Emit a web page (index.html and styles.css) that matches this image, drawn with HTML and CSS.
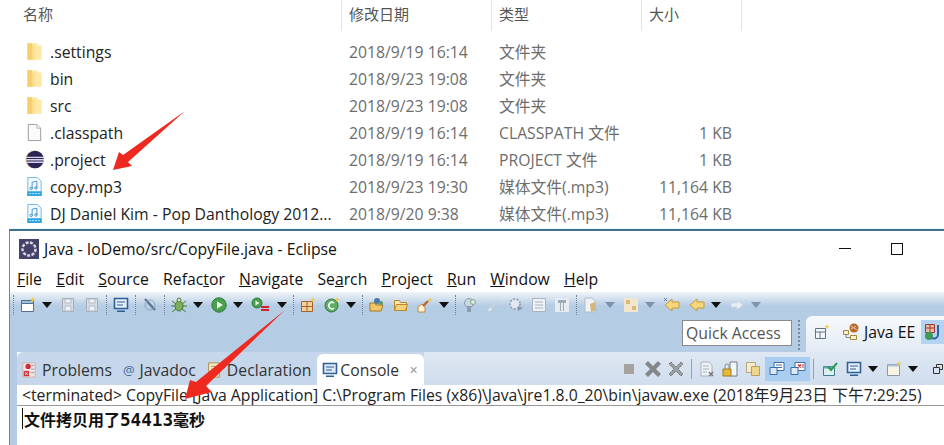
FILE: index.html
```html
<!DOCTYPE html>
<html lang="en">
<head>
    <meta charset="UTF-8">
    <title>Explorer and Eclipse</title>
    <link rel="stylesheet" href="styles.css">
</head>
<body>
    <svg class="defs" width="0" height="0">
        <defs>
            <symbol id="folder" viewBox="0 0 16 16">
                <path d="M2 1h8l1 2h3v12H2z" fill="#fde9a4"/>
                <path d="M2 1h4v14H2z" fill="#f6cf6c"/>
                <path d="M6 3h2v12H6z" fill="#fbdc86"/>
            </symbol>
            <symbol id="blank" viewBox="0 0 16 20">
                <path d="M1.5 1.5h9l4 4v13h-13z" fill="#fbfbfb" stroke="#9a9a9a"/>
                <path d="M10.5 1.5v4h4" fill="#eee" stroke="#b5b5b5"/>
            </symbol>
            <symbol id="eclipse" viewBox="0 0 20 20">
                <circle cx="10" cy="10" r="9.5" fill="#e8c08a"/>
                <circle cx="10.6" cy="10" r="9.2" fill="#2c2255"/>
                <path d="M1.4 7h18.4v1.4H1.4zM1.2 9.6h18.8V11H1.2zM1.8 12.2h17.6v1.4H1.8z" fill="#d8d6ea"/>
            </symbol>
            <symbol id="mp3" viewBox="0 0 17 20">
                <path d="M1.5.5h10l4 4v15h-14z" fill="#f2fbff" stroke="#6db6e6"/>
                <path d="M6 5.5l5-1v7M6 5.5v7" fill="none" stroke="#4b8fc0"/>
                <circle cx="5" cy="12" r="1.3" fill="none" stroke="#4b8fc0"/>
                <circle cx="10" cy="11.5" r="1.3" fill="none" stroke="#4b8fc0"/>
                <path d="M1 15h15v5H1z" fill="#2aa3e0"/>
                <path d="M3 17.5h11" stroke="#d8f1fc" stroke-dasharray="2 1"/>
            </symbol>
            <symbol id="new" viewBox="0 0 16 16">
                <path d="M1.5 3.5h12v11h-12z" fill="#fff" stroke="#55708c"/>
                <path d="M1.5 3.5h12v3h-12z" fill="#9cbfe0" stroke="#55708c"/>
                <path d="M12.5 0l1 2 2 .5-2 1-1 2-1-2-2-1 2-.5z" fill="#f2c94c"/>
            </symbol>
            <symbol id="save" viewBox="0 0 16 16">
                <path d="M2.5 1.5h11v13h-11z" fill="#d5dde6" stroke="#a3adb8"/>
                <path d="M5 2h6v4H5zM5 9h6v5H5z" fill="#eef1f5" stroke="#b3bcc6"/>
            </symbol>
            <symbol id="monitor" viewBox="0 0 16 16">
                <path d="M1.5 1.5h13v10h-13z" fill="#e6effa" stroke="#2f5f95" stroke-width="1.6"/>
                <path d="M4 5h8M4 8h6" stroke="#2f5f95"/>
                <path d="M4 13.5h8v1.5H4z" fill="#2f5f95"/>
            </symbol>
            <symbol id="pencil" viewBox="0 0 16 16">
                <path d="M3 2l10 11" stroke="#5f7690" stroke-width="2.4"/>
                <circle cx="8" cy="8" r="5" fill="none" stroke="#8ea6c2"/>
            </symbol>
            <symbol id="bug" viewBox="0 0 16 16">
                <ellipse cx="8" cy="9" rx="4" ry="5" fill="#7cae5c" stroke="#4a7b35"/>
                <path d="M1 4l4 3M15 4l-4 3M0 9h4M16 9h-4M1 15l4-3M15 15l-4-3" stroke="#4a7b35"/>
                <circle cx="8" cy="3" r="2" fill="#d8e6c8" stroke="#4a7b35"/>
            </symbol>
            <symbol id="run" viewBox="0 0 16 16">
                <circle cx="8" cy="8" r="7.2" fill="#49a04e" stroke="#2f7a3b"/>
                <path d="M6 4.2l6 3.8-6 3.8z" fill="#e8f6e0"/>
            </symbol>
            <symbol id="runext" viewBox="0 0 20 16">
                <circle cx="6" cy="6" r="5" fill="#49a04e" stroke="#2f7a3b"/>
                <path d="M4.5 3.5l4 2.5-4 2.5z" fill="#e8f6e0"/>
                <path d="M10 9h8v2h-8zM10 12h8v2h-8z" fill="#d4202c"/>
            </symbol>
            <symbol id="pkg" viewBox="0 0 16 16">
                <path d="M1.5 4.5h11v10h-11z" fill="#f1d29a" stroke="#a4622c"/>
                <path d="M1.5 9.5h11M7 4.5v10" stroke="#a4622c"/>
                <path d="M13 0l.8 2 2 .6-2 .8-.8 2-.8-2-2-.8 2-.6z" fill="#f2c94c"/>
            </symbol>
            <symbol id="cnew" viewBox="0 0 16 16">
                <circle cx="7.5" cy="8.5" r="6.5" fill="#5cae62" stroke="#2f7a3b"/>
                <path d="M10 6a3.2 3.2 0 1 0 0 5" fill="none" stroke="#fff" stroke-width="1.6"/>
                <path d="M13 0l.8 2 2 .6-2 .8-.8 2-.8-2-2-.8 2-.6z" fill="#f2c94c"/>
            </symbol>
            <symbol id="openp" viewBox="0 0 16 16">
                <path d="M1 6h5l1 2h7l-2 6H1z" fill="#f2c668" stroke="#a87a25"/>
                <circle cx="8" cy="4" r="3" fill="#4f77a8"/>
                <circle cx="12" cy="6" r="2" fill="#5a9b58"/>
            </symbol>
            <symbol id="open" viewBox="0 0 16 16">
                <path d="M1.5 3.5h5l1 2h6v8h-12z" fill="#fbe6ad" stroke="#b88a30"/>
                <path d="M1.5 13.5l2-6h11l-2 6z" fill="#f7d078" stroke="#b88a30"/>
            </symbol>
            <symbol id="search" viewBox="0 0 16 16">
                <path d="M1 15V10l4-3 3 3v5z" fill="#fff2d6" stroke="#b98b4a"/>
                <path d="M6 9l5-5" stroke="#b86a2b" stroke-width="2.4"/>
                <path d="M13 0l.8 2 2 .6-2 .8-.8 2-.8-2-2-.8 2-.6z" fill="#f2c94c"/>
            </symbol>
            <symbol id="g1" viewBox="0 0 16 16">
                <circle cx="7" cy="6" r="4.5" fill="#c9d6e3" stroke="#8d9cab"/>
                <path d="M5 9h4v6H5z" fill="#8d9cab"/>
                <circle cx="11" cy="5" r="2.5" fill="#dbe8dc" stroke="#86a58d"/>
            </symbol>
            <symbol id="g2" viewBox="0 0 16 16">
                <path d="M2 14l9-11 2 1-7 10z" fill="#c5d3e1"/>
                <path d="M2 14l3-3 2 2z" fill="#e6edf4"/>
            </symbol>
            <symbol id="g3" viewBox="0 0 16 16">
                <circle cx="7" cy="7" r="5" fill="#e3e9f0" stroke="#9aa5b1" stroke-width="2" stroke-dasharray="2 1.5"/>
                <path d="M10 9l5 2-5 3z" fill="#8a96a3"/>
            </symbol>
            <symbol id="g4" viewBox="0 0 16 16">
                <path d="M1.5 1.5h13v13h-13z" fill="#eef2f6" stroke="#a9b4c0"/>
                <path d="M4 5h8M4 8h8M4 11h8" stroke="#a9b4c0"/>
            </symbol>
            <symbol id="g5" viewBox="0 0 16 16">
                <path d="M1 1h14v14H1z" fill="#e7ecf2"/>
                <path d="M4 3h8v3H4zM6 6h1v8H6zM9 6h1v8H9z" fill="#9fabb7"/>
            </symbol>
            <symbol id="g6" viewBox="0 0 16 16">
                <path d="M2 1h7l3 3v11H2z" fill="#eef2f6" stroke="#b4bcc5"/>
                <path d="M7 7l5-2 1 8-5 2z" fill="#d5b77c"/>
            </symbol>
            <symbol id="g7" viewBox="0 0 16 16">
                <path d="M1 1h14v14H1z" fill="#f3e6cf"/>
                <path d="M3 3h4v4H3zM9 9h4v4H9z" fill="#d9b978"/>
            </symbol>
            <symbol id="back1" viewBox="0 0 18 16">
                <path d="M9 2L2 8l7 6v-3h7V5H9z" fill="#f6d77e" stroke="#c79a3b"/>
                <path d="M1 1l3 3M4 1L1 4" stroke="#6b7f95"/>
            </symbol>
            <symbol id="back" viewBox="0 0 16 16">
                <path d="M8 2L1 8l7 6v-3h7V5H8z" fill="#f6d77e" stroke="#c79a3b"/>
            </symbol>
            <symbol id="fwd" viewBox="0 0 16 16">
                <path d="M8 3l6 5-6 5v-3H2V6h6z" fill="#e9eef4" stroke="#cdd7e2"/>
            </symbol>
            <symbol id="persp" viewBox="0 0 16 16">
                <path d="M1.5 4.5h10v10h-10z" fill="#f4f6f9" stroke="#5b7490"/>
                <path d="M1.5 8h10M6 8v6.5" stroke="#5b7490"/>
                <path d="M13 0l.8 2 2 .6-2 .8-.8 2-.8-2-2-.8 2-.6z" fill="#f2c94c"/>
            </symbol>
            <symbol id="jee" viewBox="0 0 18 18">
                <path d="M1.5 7.5h5v4h-5zM8.5 12.5h6v4h-6z" fill="#fbf0cf" stroke="#a98537"/>
                <path d="M4 11.5v3h4" fill="none" stroke="#7a8a9a"/>
                <circle cx="12" cy="5" r="4.5" fill="#b8692c"/>
                <path d="M9 3l6 4M9 6l5-3" stroke="#e9c9a6"/>
            </symbol>
            <symbol id="jdev" viewBox="0 0 18 18">
                <path d="M1.5 1.5h9v8h-9z" fill="#e6bfa3" stroke="#a03a32"/>
                <path d="M1.5 5h9M6 1.5v8" stroke="#a03a32"/>
                <circle cx="5" cy="13" r="4" fill="#3c9a57"/>
                <path d="M14 2v10a4 4 0 0 1-6 3" fill="none" stroke="#3060a8" stroke-width="2"/>
            </symbol>
            <symbol id="problems" viewBox="0 0 16 18">
                <path d="M1 1h14v16H1z" fill="#f2e3e3" stroke="#c7b1b1"/>
                <circle cx="7" cy="5" r="3" fill="#c4333a"/>
                <path d="M2 10h6v6H2z" fill="#c4333a"/>
                <path d="M3.5 11.5l3 3m0-3l-3 3" stroke="#fff"/>
                <path d="M10 4h4M10 8h4M10 12h4" stroke="#9a9a9a"/>
            </symbol>
            <symbol id="decl" viewBox="0 0 16 18">
                <path d="M2 1h12v16H2z" fill="#f6e8c6" stroke="#a68a46"/>
                <path d="M5 5h6M5 8h6M5 11h6" stroke="#a68a46"/>
            </symbol>
            <symbol id="consolei" viewBox="0 0 16 16">
                <path d="M1.5 1.5h13v10h-13z" fill="#dce9f7" stroke="#2f5f95" stroke-width="1.6"/>
                <path d="M4 5h8M4 8h6" stroke="#2f5f95"/>
                <path d="M4 13.5h8v1.5H4z" fill="#2f5f95"/>
            </symbol>
            <symbol id="stop" viewBox="0 0 12 12">
                <path d="M1 1h10v10H1z" fill="#a5a29f"/>
            </symbol>
            <symbol id="xbig" viewBox="0 0 16 16">
                <path d="M3 0l5 5 5-5 3 3-5 5 5 5-3 3-5-5-5 5-3-3 5-5-5-5z" fill="#83878c"/>
            </symbol>
            <symbol id="xbig2" viewBox="0 0 16 16">
                <path d="M3 1l5 5 5-5 2 2-5 5 5 5-2 2-5-5-5 5-2-2 5-5-5-5z" fill="#9aa0a6" stroke="#666" stroke-dasharray="1.5 1"/>
            </symbol>
            <symbol id="clear" viewBox="0 0 16 16">
                <path d="M2 1h8l3 3v11H2z" fill="#eef2f6" stroke="#aab3bd"/>
                <path d="M4 5h6M4 8h6M4 11h4" stroke="#aab3bd"/>
                <path d="M10 11l4 4m0-4l-4 4" stroke="#777" stroke-width="1.4"/>
            </symbol>
            <symbol id="lock" viewBox="0 0 16 16">
                <path d="M8 1h7v14H8z" fill="#f2f5f8" stroke="#6f7d8b"/>
                <path d="M1 8h8v7H1z" fill="#e9b93c" stroke="#a37a18"/>
                <path d="M3 8V5a2 2 0 0 1 4 0v3" fill="none" stroke="#8a8f95"/>
            </symbol>
            <symbol id="pin" viewBox="0 0 16 16">
                <path d="M1.5 1.5h9v10h-9z" fill="#f4ebd0" stroke="#b8a878"/>
                <path d="M6.5 5.5h8v9h-8z" fill="#f0d68c" stroke="#b8a05a"/>
            </symbol>
            <symbol id="outp" viewBox="0 0 16 16">
                <path d="M5 1.5h10v8H5z" fill="#fff" stroke="#3a6ea5"/>
                <path d="M7 4h6M7 6.5h6" stroke="#3a6ea5"/>
                <path d="M1 6.5h7v7H1z" fill="#dfe8f2" stroke="#3a6ea5"/>
            </symbol>
            <symbol id="errp" viewBox="0 0 16 16">
                <path d="M5 1.5h10v8H5z" fill="#fff" stroke="#3a6ea5"/>
                <path d="M8 3.5l3 3m0-3l-3 3" stroke="#d02030" stroke-width="1.4"/>
                <path d="M12 4h2M12 6h2" stroke="#d02030"/>
                <path d="M1 6.5h7v7H1z" fill="#dfe8f2" stroke="#3a6ea5"/>
            </symbol>
            <symbol id="dispnew" viewBox="0 0 16 16">
                <path d="M1.5 5.5h11v9h-11z" fill="#dff0f3" stroke="#3c7d8e"/>
                <path d="M1.5 5.5h11v2h-11z" fill="#69a6b6"/>
                <path d="M6 6l3 3 6-7" fill="none" stroke="#2f9a54" stroke-width="2"/>
            </symbol>
            <symbol id="pageplus" viewBox="0 0 16 16">
                <path d="M1.5 3.5h12v11h-12z" fill="#f7f4e6" stroke="#8a97a5"/>
                <path d="M1.5 3.5h12v2h-12z" fill="#a8c4de"/>
                <path d="M13 0l.8 2 2 .6-2 .8-.8 2-.8-2-2-.8 2-.6z" fill="#f2c94c"/>
            </symbol>
            <symbol id="restore" viewBox="0 0 10 10">
                <path d="M3.5.5h6v5h-6z" fill="none" stroke="#333"/>
                <path d="M.5 3.5h6v6h-6z" fill="#d8e3f0" stroke="#333"/>
            </symbol>
        </defs>
    </svg>

    <!-- file list -->
    <div class="explorer">
        <div class="ex-row ex-head">
            <div class="col-name"><span>名称</span></div>
            <div class="col-date">修改日期</div>
            <div class="col-type">类型</div>
            <div class="col-size">大小</div>
        </div>
        <div class="ex-body">
            <div class="ex-row">
                <div class="col-name"><svg class="fi"><use href="#folder"/></svg>.settings</div>
                <div class="col-date">2018/9/19 16:14</div>
                <div class="col-type">文件夹</div>
                <div class="col-size"></div>
            </div>
            <div class="ex-row">
                <div class="col-name"><svg class="fi"><use href="#folder"/></svg>bin</div>
                <div class="col-date">2018/9/23 19:08</div>
                <div class="col-type">文件夹</div>
                <div class="col-size"></div>
            </div>
            <div class="ex-row">
                <div class="col-name"><svg class="fi"><use href="#folder"/></svg>src</div>
                <div class="col-date">2018/9/23 19:08</div>
                <div class="col-type">文件夹</div>
                <div class="col-size"></div>
            </div>
            <div class="ex-row">
                <div class="col-name"><svg class="fi"><use href="#blank"/></svg>.classpath</div>
                <div class="col-date">2018/9/19 16:14</div>
                <div class="col-type">CLASSPATH 文件</div>
                <div class="col-size">1 KB</div>
            </div>
            <div class="ex-row">
                <div class="col-name"><svg class="fi"><use href="#eclipse"/></svg>.project</div>
                <div class="col-date">2018/9/19 16:14</div>
                <div class="col-type">PROJECT 文件</div>
                <div class="col-size">1 KB</div>
            </div>
            <div class="ex-row">
                <div class="col-name"><svg class="fi"><use href="#mp3"/></svg>copy.mp3</div>
                <div class="col-date">2018/9/23 19:30</div>
                <div class="col-type">媒体文件(.mp3)</div>
                <div class="col-size">11,164 KB</div>
            </div>
            <div class="ex-row">
                <div class="col-name"><svg class="fi"><use href="#mp3"/></svg>DJ Daniel Kim - Pop Danthology 2012...</div>
                <div class="col-date">2018/9/20 9:38</div>
                <div class="col-type">媒体文件(.mp3)</div>
                <div class="col-size">11,164 KB</div>
            </div>
        </div>
    </div>

    <!-- eclipse window -->
    <div class="window">
        <div class="titlebar">
            <svg class="app-icon" viewBox="0 0 20 20">
                <path d="M0 0h20v20H0z" fill="#45426a"/>
                <circle cx="10" cy="10" r="6.5" fill="none" stroke="#d9d9e4" stroke-width="2.4" stroke-dasharray="3 1.4"/>
            </svg>
            <span class="title-text">Java - IoDemo/src/CopyFile.java - Eclipse</span>
            <span class="win-min"></span>
            <span class="win-max"></span>
        </div>
        <div class="menubar">
            <span><u>F</u>ile</span>
            <span><u>E</u>dit</span>
            <span><u>S</u>ource</span>
            <span>Refac<u>t</u>or</span>
            <span><u>N</u>avigate</span>
            <span>Se<u>a</u>rch</span>
            <span><u>P</u>roject</span>
            <span><u>R</u>un</span>
            <span><u>W</u>indow</span>
            <span><u>H</u>elp</span>
        </div>
        <div class="toolbar">
            <i class="grip"></i>
            <div class="tb-group">
                <svg class="ic"><use href="#new"/></svg><b class="dd"></b>
                <svg class="ic"><use href="#save"/></svg>
                <svg class="ic"><use href="#save"/></svg>
            </div>
            <i class="sep"></i>
            <div class="tb-group"><svg class="ic"><use href="#monitor"/></svg></div>
            <i class="sep"></i>
            <div class="tb-group"><svg class="ic"><use href="#pencil"/></svg></div>
            <i class="sep"></i>
            <div class="tb-group">
                <svg class="ic"><use href="#bug"/></svg><b class="dd"></b>
                <svg class="ic"><use href="#run"/></svg><b class="dd"></b>
                <svg class="ic wide"><use href="#runext"/></svg><b class="dd"></b>
            </div>
            <i class="sep"></i>
            <div class="tb-group">
                <svg class="ic"><use href="#pkg"/></svg>
                <svg class="ic"><use href="#cnew"/></svg><b class="dd"></b>
            </div>
            <i class="sep"></i>
            <div class="tb-group">
                <svg class="ic"><use href="#openp"/></svg>
                <svg class="ic"><use href="#open"/></svg>
                <svg class="ic"><use href="#search"/></svg><b class="dd"></b>
            </div>
            <i class="sep"></i>
            <div class="tb-group tight">
                <svg class="ic"><use href="#g1"/></svg>
                <svg class="ic"><use href="#g2"/></svg>
                <svg class="ic"><use href="#g3"/></svg>
                <svg class="ic"><use href="#g4"/></svg>
                <svg class="ic"><use href="#g5"/></svg>
            </div>
            <i class="sep"></i>
            <div class="tb-group">
                <svg class="ic"><use href="#g6"/></svg><b class="dd off"></b>
                <svg class="ic"><use href="#g7"/></svg><b class="dd off"></b>
                <svg class="ic wide2"><use href="#back1"/></svg>
                <svg class="ic"><use href="#back"/></svg><b class="dd"></b>
                <svg class="ic"><use href="#fwd"/></svg><b class="dd off"></b>
            </div>
        </div>
        <div class="subbar">
            <input class="quick" type="text" placeholder="Quick Access">
            <i class="grip tall"></i>
            <div class="persp">
                <svg class="ic"><use href="#persp"/></svg>
                <i class="persp-sep"></i>
                <div class="persp-item"><svg class="ic big"><use href="#jee"/></svg>Java EE</div>
                <div class="persp-on"><svg class="ic big"><use href="#jdev"/></svg></div>
            </div>
        </div>
        <div class="panel">
            <div class="tabbar">
                <div class="tab"><svg class="ic"><use href="#problems"/></svg>Problems</div>
                <div class="tab"><span class="at">@</span>Javadoc</div>
                <div class="tab decl"><svg class="ic"><use href="#decl"/></svg>Declaration</div>
                <div class="tab active"><svg class="ic"><use href="#consolei"/></svg>Console<span class="close">✕</span></div>
                <div class="view-tools">
                    <svg class="ic small"><use href="#stop"/></svg>
                    <svg class="ic"><use href="#xbig"/></svg>
                    <svg class="ic"><use href="#xbig2"/></svg>
                    <i class="vsep"></i>
                    <svg class="ic"><use href="#clear"/></svg>
                    <svg class="ic"><use href="#lock"/></svg>
                    <svg class="ic"><use href="#pin"/></svg>
                    <div class="toggles">
                        <svg class="ic"><use href="#outp"/></svg>
                        <svg class="ic"><use href="#errp"/></svg>
                    </div>
                    <i class="vsep after-toggles"></i>
                    <div class="tb-group tail">
                        <svg class="ic"><use href="#dispnew"/></svg>
                        <svg class="ic"><use href="#monitor"/></svg><b class="dd"></b>
                        <svg class="ic"><use href="#pageplus"/></svg><b class="dd"></b>
                        <svg class="restore"><use href="#restore"/></svg>
                    </div>
                </div>
            </div>
            <div class="term-line">&lt;terminated&gt; CopyFile [Java Application] C:\Program Files (x86)\Java\jre1.8.0_20\bin\javaw.exe (2018年9月23日 下午7:29:25)</div>
            <div class="output"><i class="caret"></i>文件拷贝用了<span class="num">54413</span>毫秒</div>
        </div>
    </div>

    <!-- red arrows drawn on top of the screenshot -->
    <svg class="arrows" viewBox="0 0 944 445">
        <path d="M185 111L123 155l-4-3-6 18 19-4-4-4z" fill="#ee2a20"/>
        <path d="M285 310L196 382l-6-2-5 19 27-7-6-6z" fill="#ee2a20"/>
    </svg>
</body>
</html>
```

FILE: styles.css
```css
* {
    box-sizing: border-box;
}
body {
    margin: 0;
    width: 944px;
    height: 445px;
    overflow: hidden;
    background: #fff;
    font-family: "Open Sans", "Noto Sans CJK SC", sans-serif;
    font-size: 15.75px;
    color: #222;
    position: relative;
}
.defs {
    position: absolute;
}
.explorer {
    height: 229px;
    padding-left: 23px;
}
.ex-row {
    display: flex;
    height: 27px;
    align-items: center;
}
.ex-head {
    height: 31px;
    color: #555;
    align-items: stretch;
    font-size: 15px;
}
.ex-head > div {
    display: flex;
    align-items: center;
    border-right: 1px solid #e5e5e5;
    padding-bottom: 4px;
}
.ex-body {
    padding-top: 7px;
}
.col-name {
    width: 319px;
    display: flex;
    align-items: center;
    white-space: nowrap;
}
.ex-body .col-name {
    margin-left: 2px;
    width: 324px;
    color: #222;
}
.ex-body .col-date {
    padding-left: 0;
    color: #6d6d6d;
}
.col-date {
    width: 150px;
    padding-left: 7px;
    color: #555;
}
.col-type {
    width: 150px;
    padding-left: 7px;
    color: #6d6d6d;
}
.ex-body .col-type {
    padding-left: 0;
}
.col-size {
    width: 100px;
    padding-left: 7px;
    color: #6d6d6d;
}
.ex-body .col-size {
    width: 83px;
    padding-left: 0;
    text-align: right;
}
.ex-head .col-type,
.ex-head .col-size {
    color: #555;
}
.fi {
    width: 19px;
    height: 19px;
    margin-right: 6px;
    flex: none;
}

.window {
    height: 216px;
    margin-left: 9px;
    border-top: 2px solid #41708f;
    border-left: 1px solid #5f8bab;
    box-shadow: 0 -1px 0 #e6fbfb;
    background: #b5cce5;
}
.titlebar {
    height: 32px;
    background: #fff;
    display: flex;
    align-items: center;
    padding: 3px 0 0 9px;
}
.app-icon {
    width: 20px;
    height: 20px;
    margin-right: 5px;
}
.title-text {
    color: #111;
}
.win-min {
    width: 12px;
    height: 1px;
    background: #111;
    margin-left: 502px;
}
.win-max {
    width: 12px;
    height: 12px;
    border: 1px solid #111;
    margin-left: 40px;
}
.menubar {
    height: 29px;
    background: #fff;
    display: flex;
    align-items: center;
    gap: 14.2px;
    padding: 3px 0 0 7px;
    color: #111;
}
.toolbar {
    height: 26px;
    display: flex;
    align-items: center;
    padding-left: 3px;
    background: linear-gradient(#f0f4f8, #b5cce5 14px);
}
.grip {
    width: 1px;
    height: 20px;
    margin-right: 6px;
    border-left: 1px dotted #6f7f90;
}
.grip.tall {
    height: 30px;
    margin: 0 6px;
    border-left: 2px dotted #78879a;
}
.tb-group {
    display: flex;
    align-items: center;
    gap: 8px;
}
.tb-group.tight {
    gap: 7px;
}
.sep {
    width: 1px;
    height: 20px;
    margin: 0 6px;
    border-left: 1px dotted #6f7f90;
}
.ic {
    width: 16px;
    height: 16px;
    flex: none;
}
.ic.wide {
    width: 20px;
}
.ic.wide2 {
    width: 18px;
}
.ic.big {
    width: 18px;
    height: 18px;
}
.ic.small {
    width: 12px;
    height: 12px;
    margin-right: 3px;
}
.dd {
    width: 0;
    height: 0;
    margin-left: -2px;
    border: 5px solid transparent;
    border-top: 6px solid #111;
    border-bottom: 0;
}
.dd.off {
    border-top-color: #7d93ab;
}

.subbar {
    height: 34px;
    display: flex;
    align-items: flex-start;
    padding: 2px 0 0 672px;
}
.quick {
    width: 110px;
    height: 26px;
    padding: 0 3px;
    border: 1px solid #8a8a8a;
    background: #fff;
    font-family: inherit;
    font-size: 15.75px;
    border-radius: 0;
}
.quick::placeholder {
    color: #555;
    opacity: 1;
}
.persp {
    flex: 1;
    height: 36px;
    margin-top: -4px;
    display: flex;
    align-items: center;
    padding: 0 0 4px 8px;
    gap: 6px;
    background: linear-gradient(#f7f9fc, #e3ebf5);
    border-top-left-radius: 6px;
    overflow: hidden;
    white-space: nowrap;
}
.persp-sep {
    width: 1px;
    height: 24px;
    background: #9fb0c2;
}
.persp-item {
    display: flex;
    align-items: center;
    gap: 4px;
    color: #111;
}
.persp-on {
    width: 24px;
    height: 24px;
    flex: none;
    display: flex;
    align-items: center;
    padding-left: 3px;
    background: #b3d3f1;
}

.panel {
    height: 93px;
    margin-left: 7px;
    background: #fff;
}
.tabbar {
    height: 33px;
    display: flex;
    align-items: center;
    padding-left: 3px;
    background: #c6d7eb;
    border-radius: 6px 0 0 0;
    color: #333;
}
.tab {
    height: 31px;
    margin-top: 2px;
    display: flex;
    align-items: center;
    gap: 5px;
    padding: 0 5px 0 1px;
    white-space: nowrap;
}
.tab .at {
    margin-left: 5px;
    color: #3a6ea5;
    font-size: 13px;
}
.tab.decl {
    margin-left: 4px;
}
.tab.active {
    margin-left: 1px;
    width: 107px;
    padding-left: 5px;
    gap: 2px;
    background: #fff;
    border-radius: 6px 6px 0 0;
}
.close {
    font-size: 11px;
    color: #999;
    margin-left: 8px;
}
.view-tools {
    flex: 1;
    height: 100%;
    display: flex;
    align-items: center;
    gap: 7px;
    padding-left: 199px;
    background: linear-gradient(#dfe8f3, #cfdded);
}
.vsep {
    width: 1px;
    height: 20px;
    background: #8ea0b3;
}
.vsep.after-toggles {
    margin-left: -4px;
}
.toggles {
    display: flex;
    height: 24px;
    align-items: center;
    gap: 5px;
    margin-left: -3px;
    padding: 0 4px;
    background: #a9cdf0;
}
.tail {
    margin-left: 1px;
}
.restore {
    width: 10px;
    height: 10px;
    margin-left: 7px;
    flex: none;
}
.term-line {
    height: 21px;
    padding: 0 0 2px 5px;
    display: flex;
    align-items: center;
    border-bottom: 1px solid #999;
    color: #222;
    white-space: nowrap;
}
.output {
    position: relative;
    padding: 1px 0 0 7px;
    font-family: "DejaVu Sans Mono", "Noto Sans CJK SC", monospace;
    font-weight: bold;
    font-size: 16px;
    color: #111;
}
.num {
    font-size: 17.6px;
}
.caret {
    position: absolute;
    left: 5px;
    top: 2px;
    width: 1px;
    height: 21px;
    background: #111;
}
.arrows {
    position: absolute;
    left: 0;
    top: 0;
    width: 944px;
    height: 445px;
}
```
